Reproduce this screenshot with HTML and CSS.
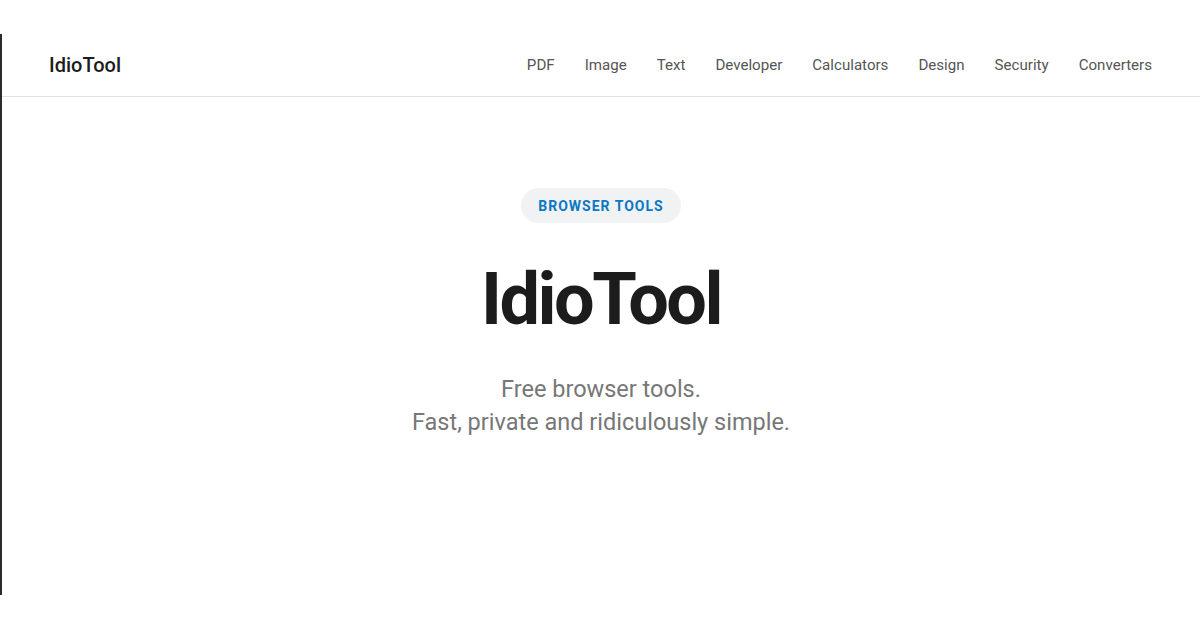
FILE: index.html
```html
<!DOCTYPE html>
<html lang="en">
<head>
  <meta charset="UTF-8">
  <meta name="viewport" content="width=device-width, initial-scale=1.0">
  <title>IdioTool</title>
  <link rel="stylesheet" href="styles.css">
</head>
<body>
  <div class="page">
    <header class="site-header">
      <a class="logo" href="#">IdioTool</a>
      <nav class="main-nav">
        <a href="#">PDF</a>
        <a href="#">Image</a>
        <a href="#">Text</a>
        <a href="#">Developer</a>
        <a href="#">Calculators</a>
        <a href="#">Design</a>
        <a href="#">Security</a>
        <a href="#">Converters</a>
      </nav>
    </header>
    <main class="hero">
      <span class="badge">Browser tools</span>
      <h1>IdioTool</h1>
      <p class="tagline">Free browser tools.<br>Fast, private and ridiculously simple.</p>
    </main>
  </div>
</body>
</html>
```

FILE: styles.css
```css
body {
  font-family: Roboto, "Noto Sans", sans-serif;
  background-color: #fff;
  color: #1c1c1c;
  margin: 0;
  padding: 0;
}
.page {
  margin-top: 34px;
  height: 561px;
  border-left: 2px solid #2b2b2b;
}
.site-header {
  height: 63px;
  display: flex;
  align-items: center;
  justify-content: space-between;
  padding: 0 48px 0 47px;
  box-sizing: border-box;
  border-bottom: 1px solid #e2e2e2;
}
.logo {
  font-size: 20px;
  font-weight: 500;
  color: #1c1c1c;
  text-decoration: none;
}
.main-nav {
  display: flex;
  gap: 30px;
}
.main-nav a {
  font-size: 15.1px;
  color: #555;
  text-decoration: none;
}
.hero {
  display: flex;
  flex-direction: column;
  align-items: center;
  text-align: center;
  padding-top: 91px;
}
.badge {
  background-color: #f1f2f4;
  color: #0a78c2;
  font-size: 14px;
  font-weight: 700;
  line-height: 16px;
  letter-spacing: 1px;
  text-transform: uppercase;
  padding: 9.5px 17px;
  border-radius: 18px;
}
h1 {
  font-size: 72px;
  font-weight: 700;
  line-height: 84px;
  letter-spacing: -2.5px;
  margin: 35px 0 0;
  color: #1c1c1c;
}
.tagline {
  font-size: 23.5px;
  line-height: 33px;
  color: #777;
  margin: 31px 0 0;
}
```
